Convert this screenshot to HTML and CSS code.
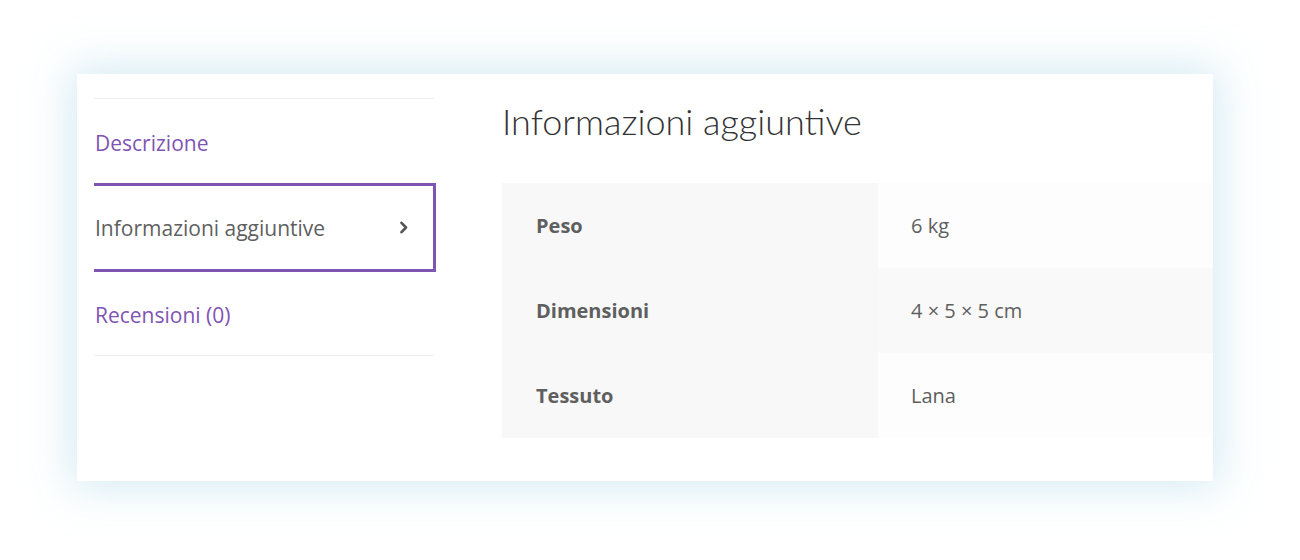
FILE: index.html
```html
<!DOCTYPE html>
<html lang="it">
<head>
  <meta charset="UTF-8" />
  <title>Informazioni aggiuntive</title>
  <link rel="stylesheet" href="styles.css">
</head>
<body>
  <div class="card">
    <ul class="tabs">
      <li class="tab"><a href="#">Descrizione</a></li>
      <li class="tab active">
        <a href="#">Informazioni aggiuntive</a>
        <svg class="chevron" width="10" height="13" viewBox="0 0 10 13">
          <path d="M2.5 1.8 L7 6.5 L2.5 11.2" fill="none" stroke="#555" stroke-width="2.6" stroke-linecap="round" stroke-linejoin="round"/>
        </svg>
      </li>
      <li class="tab"><a href="#">Recensioni (0)</a></li>
    </ul>

    <div class="panel">
      <h2>Informazioni aggiuntive</h2>
      <table class="attrs">
        <tr><th>Peso</th><td>6 kg</td></tr>
        <tr><th>Dimensioni</th><td>4 × 5 × 5 cm</td></tr>
        <tr><th>Tessuto</th><td>Lana</td></tr>
      </table>
    </div>
  </div>
</body>
</html>
```

FILE: styles.css
```css
body {
  margin: 0;
  height: 560px;
  background: #fff;
  font-family: "Open Sans", "Noto Sans", sans-serif;
  color: #5f5f5f;
  overflow: hidden;
}

.card {
  margin: 74px 0 0 77px;
  width: 1136px;
  height: 407px;
  background: #fff;
  box-shadow: 0 0 40px 6px rgba(160, 210, 228, 0.45);
  display: flex;
  padding-left: 17px;
  padding-top: 24px;
  box-sizing: border-box;
}

.tabs {
  list-style: none;
  margin: 0;
  padding: 0;
  width: 342px;
  flex-shrink: 0;
}

.tab {
  width: 340px;
  height: 86px;
  box-sizing: border-box;
  display: flex;
  align-items: center;
  justify-content: space-between;
  border-top: 1px solid #eeeeee;
  font-size: 21px;
  padding-top: 3px;
}

.tab:first-child {
  height: 85px;
}

.tab:last-child {
  border-bottom: 1px solid #eeeeee;
  border-top: none;
  height: 84px;
}

.tab a {
  color: #7f54b3;
  text-decoration: none;
  padding-left: 1px;
}

.tab.active {
  width: 342px;
  height: 89px;
  border: 3px solid #7f54b3;
  border-left: none;
  padding-top: 0;
  padding-right: 24px;
}

.tab.active a {
  color: #5f5f5f;
}

.chevron {
  display: block;
}

.panel {
  margin-left: 66px;
  flex: 1;
}

.panel h2 {
  margin: 0;
  font-family: "Lato", sans-serif;
  font-weight: 300;
  font-size: 36px;
  color: #333;
  line-height: 46px;
  padding-bottom: 39px;
}

.attrs {
  width: 100%;
  border-collapse: collapse;
  font-size: 20px;
}

.attrs th,
.attrs td {
  height: 85px;
  padding: 0 0 0 34px;
  text-align: left;
  vertical-align: middle;
}

.attrs th {
  width: 342px;
  background: #f8f8f8;
  font-weight: 700;
  color: #5f5f5f;
}

.attrs td {
  background: #fdfdfd;
  padding-left: 33px;
}

.attrs tr:nth-child(2) td {
  background: #f9f9f9;
}
```
